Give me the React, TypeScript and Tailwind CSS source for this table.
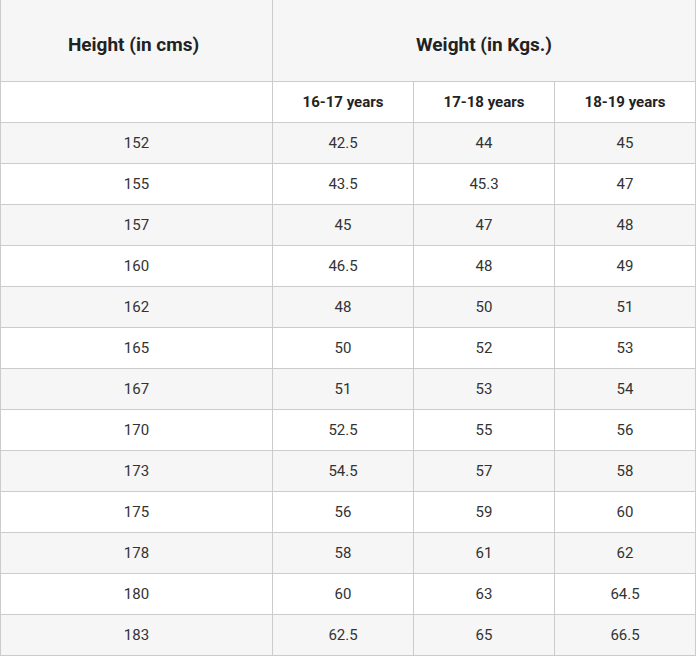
const rows: [string, string, string, string][] = [
  ["152", "42.5", "44", "45"],
  ["155", "43.5", "45.3", "47"],
  ["157", "45", "47", "48"],
  ["160", "46.5", "48", "49"],
  ["162", "48", "50", "51"],
  ["165", "50", "52", "53"],
  ["167", "51", "53", "54"],
  ["170", "52.5", "55", "56"],
  ["173", "54.5", "57", "58"],
  ["175", "56", "59", "60"],
  ["178", "58", "61", "62"],
  ["180", "60", "63", "64.5"],
  ["183", "62.5", "65", "66.5"],
];

const cell = "flex items-center justify-center border-r border-b border-[#cccccc]";

export default function App() {
  return (
    <div className="bg-white min-h-screen" style={{ fontFamily: "Roboto, 'Liberation Sans', sans-serif" }}>
      <div className="grid w-[696px] grid-cols-[273px_141px_141px_141px]">
        {/* top header */}
        <div className={`${cell} border-l h-[82px] bg-[#f6f6f6] text-[19px] font-bold text-[#222222] pt-[10px] pr-[6px]`}>
          Height (in cms)
        </div>
        <div className={`${cell} col-span-3 h-[82px] bg-[#f6f6f6] text-[19px] font-bold text-[#222222] pt-[10px]`}>
          Weight (in Kgs.)
        </div>

        {/* age groups */}
        <div className={`${cell} border-l h-[41px] bg-white`} />
        {["16-17 years", "17-18 years", "18-19 years"].map((a) => (
          <div key={a} className={`${cell} h-[41px] bg-white text-[15px] font-bold text-[#222222]`}>
            {a}
          </div>
        ))}

        {/* data */}
        {rows.map((r, i) =>
          r.map((v, j) => (
            <div
              key={`${i}-${j}`}
              className={`${cell} ${j === 0 ? "border-l" : ""} ${i % 2 === 0 ? "bg-[#f6f6f6]" : "bg-white"} h-[41px] text-[15px] text-[#333333]`}
            >
              {v}
            </div>
          ))
        )}
      </div>
    </div>
  );
}
